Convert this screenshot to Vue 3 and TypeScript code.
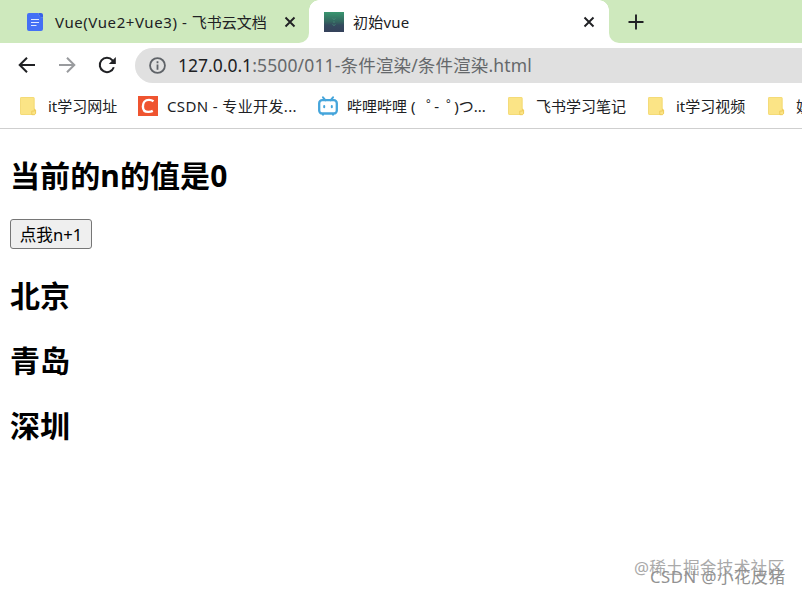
<script setup lang="ts">
import { ref } from 'vue'

interface Bookmark {
  icon: 'folder' | 'csdn' | 'bili'
  label: string
  width: number
}

const bookmarks: Bookmark[] = [
  { icon: 'folder', label: 'it学习网址', width: 118 },
  { icon: 'csdn', label: 'CSDN - 专业开发...', width: 180 },
  { icon: 'bili', label: '哔哩哔哩 ( ゜-゜)つ...', width: 190 },
  { icon: 'folder', label: '飞书学习笔记', width: 140 },
  { icon: 'folder', label: 'it学习视频', width: 120 },
  { icon: 'folder', label: '娱乐', width: 80 },
]

const n = ref(0)
const cities: string[] = ['北京', '青岛', '深圳']

// Keeps each ring mark as its own piece so it can hug the character after it.
const pieces = (label: string): string[] => label.split(/(゜)/)
</script>

<template>
  <div class="window">
    <header class="tabs">
      <div class="tab first">
        <svg class="doc" viewBox="0 0 16 18">
          <path d="M2 0H11.5A4.5 4.5 0 0 0 16 4.5V16a2 2 0 0 1-2 2H2a2 2 0 0 1-2-2V2a2 2 0 0 1 2-2Z" fill="#4470f5" />
          <path d="M11.5 0H14a2 2 0 0 1 2 2v2.5A4.5 4.5 0 0 1 11.5 0Z" fill="#3761e8" />
          <path d="M4 6.500h8M4 9.500h8M4 12.500h5.500" stroke="#dfe8ff" stroke-width="1.2" />
        </svg>
        <span class="title long"><span class="wide">Vue(Vue2+Vue3) - </span>飞书云文档</span>
        <svg class="close" viewBox="0 0 12 12"><path d="M1.5 1.5l9 9M10.5 1.5l-9 9" /></svg>
      </div>
      <div class="tab active">
        <svg class="vue" viewBox="0 0 20 20">
          <defs>
            <linearGradient id="vueTint" x1="0" y1="0" x2="0" y2="1">
              <stop offset="0" stop-color="#39966f" />
              <stop offset=".5" stop-color="#34645f" />
              <stop offset=".65" stop-color="#344b5e" />
              <stop offset="1" stop-color="#35415b" />
            </linearGradient>
          </defs>
          <rect width="20" height="20" fill="url(#vueTint)" />
          <path d="M8.5 6l1.5 2 1.5-2M10 9v2M8.5 12.5l1.5 1 1.5-1" fill="none" stroke="#438575" stroke-width=".9" />
        </svg>
        <span class="title short">初始vue</span>
        <svg class="close" viewBox="0 0 12 12"><path d="M1.5 1.5l9 9M10.5 1.5l-9 9" /></svg>
      </div>
      <div class="rest">
        <svg class="plus" viewBox="0 0 16 16"><path d="M8 .5v15M.5 8h15" /></svg>
      </div>
    </header>

    <nav class="toolbar">
      <svg class="nav" viewBox="0 0 20 20"><path d="M18 10H3M10 2.7L2.7 10l7.3 7.3" /></svg>
      <svg class="nav muted" viewBox="0 0 20 20"><path d="M2 10h15M10 2.7l7.3 7.3-7.3 7.3" /></svg>
      <svg class="nav" viewBox="0 0 20 20">
        <path d="M16.8 12.2A7.2 7.2 0 1 1 15.5 5.3L17 7" />
        <path class="tip" d="M18.8 2v7h-7Z" />
      </svg>
      <div class="omnibox">
        <svg class="info" viewBox="0 0 16 16">
          <circle cx="8" cy="8" r="7" />
          <path d="M8 7v5M8 4v1.8" />
        </svg>
        <span class="url"><b>127.0.0.1</b>:5500/011-条件渲染/条件渲染.html</span>
      </div>
    </nav>

    <div class="bookmarks">
      <div v-for="item in bookmarks" :key="item.label" class="bookmark" :style="{ width: item.width + 'px' }">
        <svg v-if="item.icon === 'folder'" class="icon" viewBox="0 0 20 20">
          <path d="M1.500 1h11.700a1.400 1.400 0 0 1 1.400 1.400v10.400l1.400 1.400v3.400L14.600 19H1.500A1.400 1.400 0 0 1 .1 17.600V2.400A1.400 1.400 0 0 1 1.500 1Z" fill="#fbe486" />
          <path d="M13.500 18.500H1.500A1 1 0 0 1 .5 17.500V2.500a1 1 0 0 1 1-1h11.500a1 1 0 0 1 1 1v10.500" fill="none" stroke="#f3d874" stroke-width=".8" />
          <path d="M14.400 13l1.200 1v3.500l-1.200 1.200h-2.600v-3.600h2.600Z" fill="#fbe486" stroke="#edcb59" stroke-width=".9" />
        </svg>
        <svg v-else-if="item.icon === 'csdn'" class="icon" viewBox="0 0 20 20">
          <rect width="20" height="20" fill="#ef5430" />
          <path d="M15.500 5.200C14 4.200 12.500 3.900 11 3.900C7 3.900 4.900 6.800 4.900 10.400C4.900 13.900 7 15.900 10.300 15.900C12 15.900 13.300 15.700 14.800 14.900" fill="none" stroke="#fff" stroke-width="2.400" />
        </svg>
        <svg v-else class="icon" viewBox="0 0 20 20">
          <path d="M5 1.300l2.500 3M15 1.300l-2.500 3" fill="none" stroke="#45a5db" stroke-width="2" stroke-linecap="round" />
          <rect x="1.200" y="4.200" width="17.600" height="13.300" rx="3" fill="none" stroke="#45a5db" stroke-width="2.300" />
          <path d="M6.200 10v1.200M13.800 10v1.200" stroke="#45a5db" stroke-width="2" stroke-linecap="round" />
          <path d="M4 18.700h2M14 18.700h2" stroke="#45a5db" stroke-width="1.500" />
        </svg>
        <span class="label" :class="item.icon"><span v-for="(piece, i) in pieces(item.label)" :key="i" :class="{ ring: piece === '゜' }">{{ piece }}</span></span>
      </div>
    </div>

    <main class="page">
      <h2>当前的n的值是{{ n }}</h2>
      <button type="button" @click="n++">点我n+1</button>
      <h2 v-for="city in cities" :key="city">{{ city }}</h2>
    </main>

    <div class="mark back">@稀土掘金技术社区</div>
    <div class="mark front">CSDN @小花皮猪</div>
  </div>
</template>

<style>
body {
  margin: 0;
  background: #fff;
}
</style>

<style scoped>
.window {
  position: relative;
  width: 802px;
  height: 595px;
  overflow: hidden;
  background: #fff;
  color: #202124;
  font-family: 'Noto Sans', 'Noto Sans CJK SC', sans-serif;
}
svg {
  display: block;
  flex: none;
}
.tabs {
  display: flex;
  height: 43px;
  background: #fff;
}
.tab,
.rest {
  display: flex;
  align-items: center;
  box-sizing: border-box;
  background: #cee9bd;
}
.first {
  width: 309px;
  padding-left: 27px;
  border-bottom-right-radius: 10px;
}
.active {
  width: 300px;
  padding-left: 15px;
  background: radial-gradient(circle at 10px 10px, #fff 9.5px, #cee9bd 10px) 0 0 / 10px 10px no-repeat,
    radial-gradient(circle at 0 10px, #fff 9.5px, #cee9bd 10px) 100% 0 / 10px 10px no-repeat,
    #fff;
}
.rest {
  flex: 1;
  padding-left: 19px;
  border-bottom-left-radius: 10px;
}
.doc {
  width: 16px;
  height: 18px;
  margin-right: 12px;
}
.vue {
  width: 20px;
  height: 20px;
  margin-right: 9px;
}
.title {
  font-size: 15px;
  line-height: 20px;
  white-space: nowrap;
}
.long {
  width: 229px;
}
.short {
  width: 230px;
  letter-spacing: 0.2px;
}
.wide {
  letter-spacing: 0.57px;
}
.close {
  width: 12px;
  height: 12px;
}
.close path,
.plus path {
  fill: none;
  stroke: #202124;
  stroke-width: 1.9;
}
.plus {
  width: 16px;
  height: 16px;
}
.toolbar {
  display: flex;
  align-items: center;
  height: 45px;
  padding-left: 17px;
}
.nav {
  width: 20px;
  height: 20px;
  margin-right: 20px;
  margin-top: -2px;
}
.nav path {
  fill: none;
  stroke: #202124;
  stroke-width: 2;
}
.nav .tip {
  fill: #202124;
  stroke: none;
}
.nav.muted path {
  stroke: #999b9e;
}
.omnibox {
  display: flex;
  align-items: center;
  flex: 1;
  height: 35px;
  margin-left: -2px;
  padding-left: 14px;
  border-radius: 18px 0 0 18px;
  background: #e0e0e0;
}
.info {
  width: 17px;
  height: 17px;
  margin-right: 12px;
}
.info circle,
.info path {
  fill: none;
  stroke: #5f6368;
  stroke-width: 1.7;
}
.url {
  padding-bottom: 2px;
  color: #65686b;
  font-size: 17.5px;
  line-height: 24px;
  letter-spacing: 0.15px;
  white-space: nowrap;
}
.url b {
  color: #202124;
  font-weight: 400;
  letter-spacing: 0;
}
.bookmarks {
  display: flex;
  box-sizing: border-box;
  height: 41px;
  padding-left: 20px;
  padding-bottom: 4px;
  border-bottom: 1px solid #cfcfcf;
}
.bookmark {
  display: flex;
  flex: none;
  align-items: center;
}
.icon {
  width: 20px;
  height: 20px;
  margin-right: 8px;
}
.label {
  font-size: 15px;
  line-height: 20px;
  white-space: pre;
}
.csdn,
.bili {
  padding-left: 1px;
}
.csdn {
  letter-spacing: 0.37px;
}
.ring {
  padding-left: 7px;
  margin-right: -7px;
}
.page {
  padding: 25px 10px 0;
  color: #000;
}
.page h2 {
  margin: 0 0 21px;
  font-size: 30px;
  line-height: 44px;
  font-weight: 700;
}
.page h2:first-child {
  letter-spacing: 0.1px;
}
.page button {
  display: block;
  box-sizing: border-box;
  width: 82px;
  height: 30px;
  margin: 0 0 25px;
  padding: 2px 0 0;
  border: 1px solid #767676;
  border-radius: 3px;
  background: #efefef;
  color: #000;
  font: 16.6px/26px 'Noto Sans', 'Noto Sans CJK SC', sans-serif;
  white-space: nowrap;
}
.mark {
  position: absolute;
  white-space: nowrap;
  font-size: 16.7px;
  line-height: 24px;
}
.back {
  left: 634px;
  top: 556px;
  color: #aaa;
  letter-spacing: 0.2px;
}
.front {
  left: 650px;
  top: 565px;
  color: #929292;
  letter-spacing: 0.5px;
}
</style>
